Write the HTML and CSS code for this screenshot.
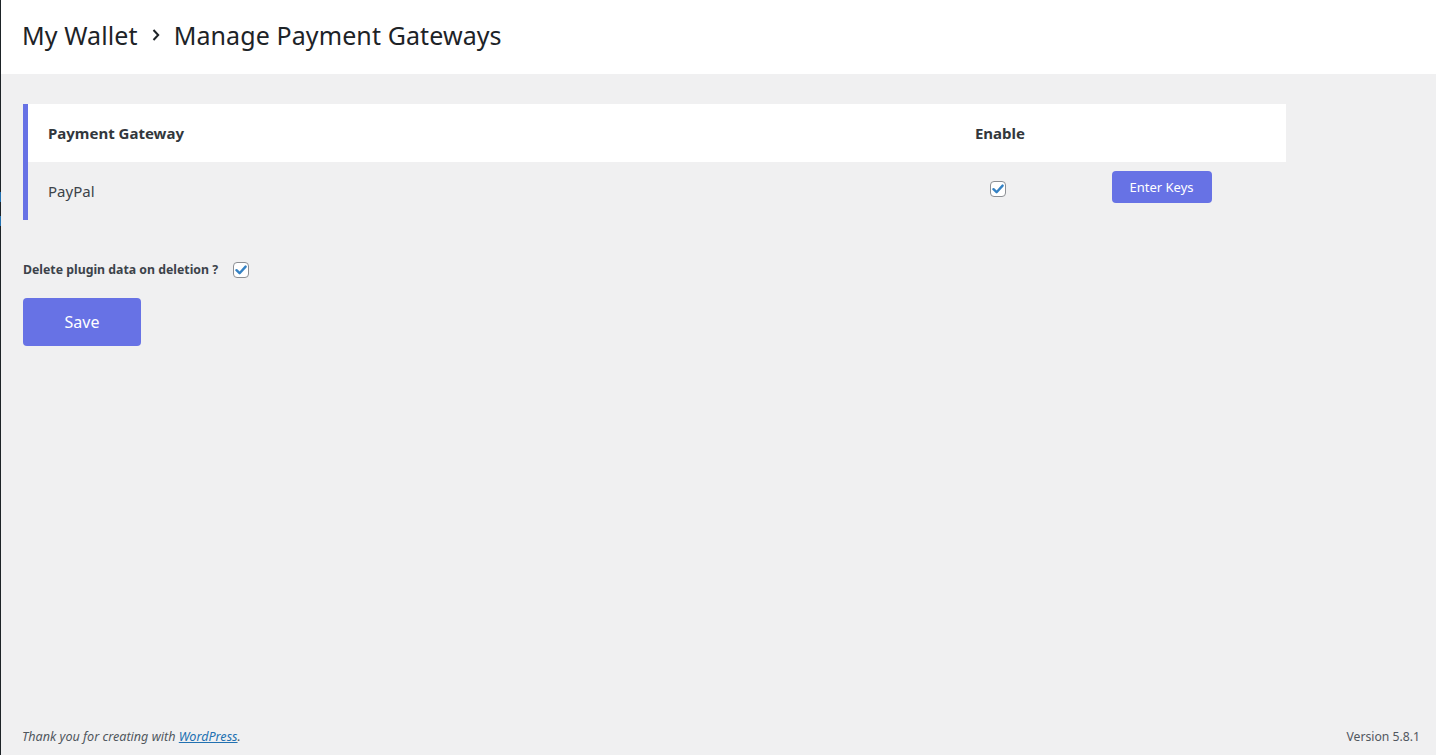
FILE: index.html
```html
<!DOCTYPE html>
<html lang="en">
<head>
<meta charset="utf-8">
<title>Manage Payment Gateways</title>
<link rel="stylesheet" href="styles.css">
</head>
<body>
<div class="shell">
  <div class="menu-edge">
    <span class="edge-mark mark-1"></span>
    <span class="edge-mark mark-2"></span>
  </div>
  <div class="main">
    <header class="topbar">
      <h1 class="crumbs">
        <span>My Wallet</span>
        <svg class="chev" width="10" height="14" viewBox="0 0 10 14"><path d="M2.5 2 L7.2 7 L2.5 12" fill="none" stroke="#1d2327" stroke-width="2"/></svg>
        <span>Manage Payment Gateways</span>
      </h1>
    </header>
    <section class="content">
      <div class="gw-table">
        <div class="gw-row gw-head">
          <div class="cell cell-name">Payment Gateway</div>
          <div class="cell cell-enable">Enable</div>
          <div class="cell cell-action"></div>
        </div>
        <div class="gw-row gw-body">
          <div class="cell cell-name">PayPal</div>
          <div class="cell cell-enable">
            <span class="cbox"><svg width="12" height="10" viewBox="0 0 12 10"><path d="M1.5 5.2 L4.6 8.2 L10.6 1.6" fill="none" stroke="#3582c4" stroke-width="2.4" stroke-linecap="round" stroke-linejoin="round"/></svg></span>
          </div>
          <div class="cell cell-action"><button class="btn btn-small">Enter Keys</button></div>
        </div>
      </div>
      <div class="option">
        <label class="opt-label">Delete plugin data on deletion ?</label>
        <span class="cbox"><svg width="12" height="10" viewBox="0 0 12 10"><path d="M1.5 5.2 L4.6 8.2 L10.6 1.6" fill="none" stroke="#3582c4" stroke-width="2.4" stroke-linecap="round" stroke-linejoin="round"/></svg></span>
      </div>
      <button class="btn btn-save">Save</button>
    </section>
    <footer class="footer">
      <p class="thanks">Thank you for creating with <a href="#">WordPress</a>.</p>
      <p class="version">Version 5.8.1</p>
    </footer>
  </div>
</div>
</body>
</html>
```
FILE: styles.css
```css
* { box-sizing: border-box; }
html, body { margin: 0; padding: 0; height: 100%; }
body {
  font-family: "Noto Sans", "Open Sans", sans-serif;
  color: #3c434a;
  background: #f0f0f1;
}
.shell { display: flex; height: 755px; }
.menu-edge {
  width: 1px;
  flex: 0 0 1px;
  background: #1d2327;
  display: flex;
  flex-direction: column;
}
.edge-mark { display: block; width: 1px; height: 10px; background: #2271b1; }
.mark-1 { margin-top: 192px; }
.mark-2 { margin-top: 14px; }
.main { flex: 1; display: flex; flex-direction: column; }
.topbar {
  background: #fff;
  height: 74px;
  display: flex;
  align-items: center;
  padding: 0 0 4px 21px;
}
.crumbs {
  margin: 0;
  font-size: 25px;
  font-weight: 400;
  color: #1d2327;
  display: flex;
  align-items: center;
  gap: 12px;
  letter-spacing: 0.1px;
}
.chev { margin: 0 1px; }
.content { padding: 30px 0 0 22px; flex: 1; }
.gw-table {
  width: 1263px;
  border-left: 5px solid #6772e5;
}
.gw-row {
  display: grid;
  grid-template-columns: 1fr 76px 248px;
  align-items: center;
}
.gw-head { background: #fff; height: 58px; font-weight: 700; font-size: 15px; color: #32373c; }
.gw-body { height: 58px; font-size: 15px; color: #3c434a; }
.cell-name { padding-left: 20px; }
.cell-enable { text-align: center; display: flex; justify-content: center; }
.gw-body .cell-enable { padding-right: 4px; margin-top: -5px; }
.cell-action { display: flex; justify-content: center; }
.cbox {
  width: 16px; height: 16px;
  border: 1px solid #8c8f94;
  border-radius: 4px;
  background: #fff;
  display: inline-flex;
  align-items: center;
  justify-content: center;
}
.btn {
  background: #6772e5;
  color: #fff;
  border: 0;
  border-radius: 4px;
  font-family: inherit;
  cursor: pointer;
}
.btn-small { width: 100px; height: 32px; font-size: 13px; margin-top: -8px; margin-left: -1px; }
.option { display: flex; align-items: center; gap: 15px; margin-top: 41px; }
.opt-label { font-size: 12.3px; font-weight: 700; color: #3c434a; }
.btn-save { margin-top: 20px; width: 118px; height: 48px; font-size: 16px; }
.footer {
  display: flex;
  justify-content: space-between;
  align-items: center;
  padding: 0 16px 10px 21px;
  font-size: 12.6px;
  color: #50575e;
}
.footer p { margin: 0; }
.thanks { font-style: italic; }
.thanks a { color: #2271b1; }
.version { font-size: 12.2px; }
```
